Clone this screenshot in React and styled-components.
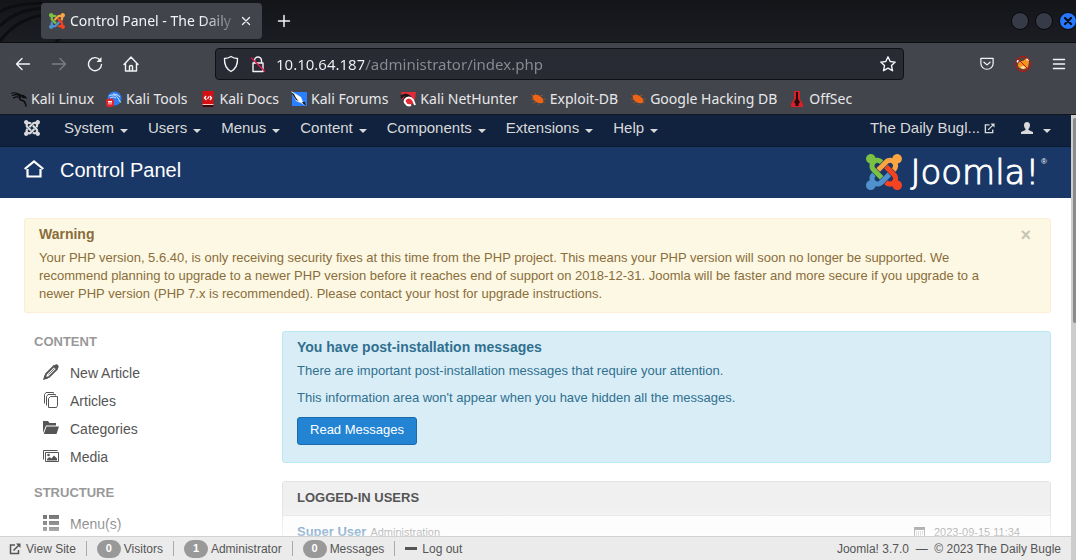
import React from "react";
import styled, { createGlobalStyle } from "styled-components";

const GlobalStyle = createGlobalStyle`
  * { box-sizing: border-box; }
  body { margin: 0; background: #fff; }
  h1, h2, h3, p, ul { margin: 0; padding: 0; }
  ul { list-style: none; }
  a { color: inherit; text-decoration: none; }
  button { border: 0; padding: 0; background: none; color: inherit; font: inherit; cursor: pointer; }
  svg { display: block; flex: none; }
`;

const chromeFont = `"Noto Sans", "Open Sans", sans-serif`;
const pageFont = `"Liberation Sans", Arial, sans-serif`;

/* ---------- browser chrome ---------- */

const Window = styled.div`
  display: flex;
  flex-direction: column;
  height: 100vh;
  overflow: hidden;
  font-family: ${pageFont};
`;

const TitleBar = styled.header`
  display: flex;
  align-items: center;
  flex: none;
  height: 43px;
  padding-left: 41px;
  overflow: hidden;
  background: linear-gradient(#141519, #1c1d23);
  border-bottom: 1px solid #0c0d11;
  color: #f4f4f6;
  font-family: ${chromeFont};
  position: relative;
`;

const Swirl = styled.svg`
  position: absolute;
  left: 0;
  top: 0;
`;

const Tab = styled.div`
  position: relative;
  display: flex;
  align-items: center;
  flex: none;
  gap: 5px;
  width: 221px;
  height: 36px;
  padding: 0 8px;
  border-radius: 4px;
  background: #42444c;
`;

const TabTitle = styled.span`
  flex: 1;
  overflow: hidden;
  white-space: nowrap;
  font-size: 14px;
  line-height: 20px;
  mask-image: linear-gradient(to right, #000 130px, transparent 172px);
`;

const IconButton = styled.button`
  display: flex;
  align-items: center;
  justify-content: center;
  width: ${(p) => p.$size || 20}px;
  height: ${(p) => p.$size || 20}px;
  flex: none;
`;

const NewTab = styled(IconButton)`
  margin-left: 12px;
`;

const WindowControls = styled.div`
  display: flex;
  flex: none;
  gap: 6px;
  margin-left: auto;
  margin-right: -1px;
`;

const Dot = styled.button`
  display: flex;
  align-items: center;
  justify-content: center;
  width: 18px;
  height: 18px;
  border: 1px solid #08090b;
  border-radius: 50%;
  background: ${(p) => (p.$close ? "#2777ff" : "#363b47")};
  color: #0b0e16;
`;

const Toolbar = styled.div`
  display: flex;
  align-items: center;
  flex: none;
  height: 41px;
  padding: 0 7px 0 13px;
  background: #42454c;
  color: #f4f4f6;
`;

const NavButtons = styled.div`
  display: flex;
  flex: none;
  gap: 16px;
  width: 202px;
`;

const UrlBar = styled.form`
  display: flex;
  align-items: center;
  flex: 1;
  gap: 9px;
  height: 32px;
  padding: 0 6px;
  border: 1px solid #101116;
  border-radius: 4px;
  background: #282a34;
`;

const UrlInput = styled.input`
  flex: 1;
  min-width: 0;
  height: 30px;
  padding: 0;
  border: 0;
  outline: 0;
  background: linear-gradient(to right, #f6f6f8 88px, #8b8c93 88px);
  background-clip: text;
  color: transparent;
  font-family: ${chromeFont};
  font-size: 15px;
`;

const ToolbarExtras = styled.div`
  display: flex;
  flex: none;
  gap: 16px;
  margin-left: 73px;
`;

const Bookmarks = styled.nav`
  display: flex;
  flex: none;
  gap: 12px;
  height: 31px;
  padding: 0 11px;
  border-bottom: 1px solid #14161a;
  background: #42454c;
  color: #e8e8ea;
  font-family: ${chromeFont};
  font-size: 14px;
  line-height: 30px;
  white-space: nowrap;
`;

const Bookmark = styled.a`
  display: flex;
  align-items: center;
  gap: 4px;
`;

/* ---------- page ---------- */

const Viewport = styled.div`
  display: flex;
  flex: 1;
  min-height: 0;
`;

const Page = styled.div`
  display: flex;
  flex-direction: column;
  flex: 1;
  min-width: 0;
`;

const ScrollTrack = styled.div`
  flex: none;
  width: 5px;
  padding: 3px 0 0 2px;
  background: #cdcdcd;
`;

const ScrollThumb = styled.div`
  width: 3px;
  height: 205px;
  border-radius: 2px 0 0 2px;
  background: #8b8b8b;
`;

const Navbar = styled.nav`
  display: flex;
  flex: none;
  gap: 20px;
  height: 32px;
  padding: 0 20px 5px 24px;
  border-bottom: 1px solid #0d1a30;
  background: #10223e;
  color: #d9d9d9;
  font-size: 15px;
  line-height: 26px;
`;

const MenuItem = styled.button`
  display: flex;
  align-items: center;
  gap: ${(p) => p.$gap || 6}px;
  white-space: nowrap;
`;

const Caret = styled.span`
  margin-top: 6px;
  border: 4px solid transparent;
  border-top-color: currentColor;
  border-bottom: 0;
`;

const NavBrand = styled.a`
  display: flex;
  align-items: center;
  margin-right: 4px;
`;

const SiteLink = styled.a`
  display: flex;
  align-items: center;
  gap: 4px;
  margin-left: auto;
  margin-right: 6px;
`;

const PageHeader = styled.header`
  display: flex;
  align-items: center;
  flex: none;
  height: 51px;
  padding: 0 24px 6px;
  background: #1a3867;
  color: #fff;
`;

const PageTitle = styled.h1`
  display: flex;
  align-items: center;
  flex: 1;
  gap: 16px;
  font-size: 20px;
  line-height: 24px;
  font-weight: 400;
`;

const Logo = styled.div`
  display: flex;
  align-items: center;
  gap: 8px;
  height: 40px;
  padding-top: 4px;
`;

const Wordmark = styled.span`
  font-family: "DejaVu Sans Light", "DejaVu Sans", sans-serif;
  font-weight: 200;
  font-size: 34px;
  line-height: 36px;
  -webkit-text-stroke: 1px #fff;
`;

const Registered = styled.sup`
  align-self: flex-start;
  margin-left: -6px;
  padding-top: 4px;
  font-size: 8px;
  line-height: 8px;
`;

const Scroller = styled.div`
  position: relative;
  flex: 1;
  min-height: 0;
  overflow: hidden;
  padding: 20px 20px 0 24px;
`;

const Fade = styled.div`
  position: absolute;
  left: 0;
  right: 0;
  bottom: 0;
  height: 30px;
  background: linear-gradient(rgba(255, 255, 255, 0), rgba(255, 255, 255, 0.6));
`;

const Alert = styled.section`
  padding: ${(p) => (p.$info ? "6px 14px 17px" : "6px 36px 9px 14px")};
  border: 1px solid ${(p) => (p.$info ? "#bce8f1" : "#fbeed5")};
  border-radius: 3px;
  background: ${(p) => (p.$info ? "#d9edf7" : "#fcf8e3")};
  color: ${(p) => (p.$info ? "#30708f" : "#8a6d3b")};
  font-size: 13px;
  line-height: 18px;
  position: relative;
`;

const AlertTitle = styled.h2`
  margin-bottom: 6px;
  font-size: 14px;
  line-height: 18px;
`;

const AlertText = styled.p`
  margin-bottom: ${(p) => p.$gap || 0}px;
`;

const Dismiss = styled.button`
  position: absolute;
  right: 19px;
  top: 7px;
  color: #c9c5b4;
  font-size: 18px;
  font-weight: 700;
  line-height: 18px;
`;

const Columns = styled.div`
  display: grid;
  grid-template-columns: 248px minmax(0, 1fr);
  gap: 10px;
  padding-top: 18px;
`;

const Sidebar = styled.nav`
  padding: 1px 0 0 10px;
  color: #555;
  font-size: 14px;
`;

const GroupTitle = styled.h3`
  margin-bottom: 7px;
  color: #999;
  font-size: 13px;
  line-height: 20px;
`;

const LinkList = styled.ul`
  margin-bottom: 12px;
`;

const SideLink = styled.a`
  display: flex;
  align-items: center;
  gap: 11px;
  height: 28px;
  padding-left: 9px;

  svg {
    margin-bottom: 2px;
  }
`;

const Main = styled.main`
  display: flex;
  flex-direction: column;
  gap: 18px;
  margin-left: -10px;
  padding-left: 10px;
`;

const PrimaryButton = styled.button`
  width: 120px;
  height: 28px;
  padding-bottom: 3px;
  border: 1px solid #1b6aaa;
  border-radius: 3px;
  background: #2384d3;
  color: #fff;
  font-size: 13px;
`;

const Panel = styled.section`
  border: 1px solid #e3e3e3;
  border-radius: 3px;
  background: #fcfcfc;
`;

const PanelTitle = styled.h2`
  padding: 0 14px 2px;
  border-bottom: 1px solid #e3e3e3;
  background: #f0f0f0;
  color: #555;
  font-size: 13px;
  line-height: 31px;
`;

const UserRow = styled.div`
  display: flex;
  align-items: center;
  gap: 4px;
  height: 36px;
  padding: 0 30px 5px 14px;
  color: #777;
  font-size: 11px;
`;

const UserName = styled.a`
  color: #3071a9;
  font-size: 13px;
  font-weight: 700;
`;

const UserDate = styled.span`
  display: flex;
  align-items: center;
  gap: 9px;
  margin-left: auto;
`;

const StatusBar = styled.footer`
  display: flex;
  align-items: center;
  flex: none;
  height: 24px;
  padding: 0 10px 0 9px;
  border-top: 1px solid #cfd3d1;
  background: #ebebeb;
  color: #555;
  font-size: 12px;
  line-height: 20px;
`;

const StatusItem = styled.a`
  display: flex;
  align-items: center;
  gap: ${(p) => (p.$badge ? 3 : 5)}px;
  & + & {
    margin-left: 10px;
    padding-left: 10px;
    border-left: 1px solid #aaa;
    height: 15px;
  }
`;

const Badge = styled.span`
  width: 24px;
  height: 18px;
  border-radius: 9px;
  background: #999;
  color: #fff;
  font-size: 11px;
  font-weight: 700;
  line-height: 17px;
  text-align: center;
`;

const Copyright = styled.p`
  margin-left: auto;
  white-space: pre;
`;

/* ---------- icons ---------- */

const joomlaParts = [
  ["#7ac143", "M.6 92.1C.6 58.8 27.4 32 60.4 32c30 0 54.5 21.9 59.2 50.2 32.6-7.6 67.1.6 96.5 30l-44.3 44.3c-20.5-20.5-42.6-16.3-55.4-3.5-14.3 14.3-14.3 37.9 0 52.2l99.5 99.5-44 44.3c-87.7-87.2-49.7-49.7-99.8-99.7-26.8-26.5-35-64.8-24.8-98.9C20.4 144.6.6 120.7.6 92.1z"],
  ["#f9a541", "M130.1 208.5l44.3 44.3c10-10 89.7-89.7 99.7-99.8 14.3-14.3 37.6-14.3 51.9 0 12.8 12.8 17 35-3.5 55.4l44 44.3c31.2-31.2 38.5-67.6 28.9-101.2 29.2-4.1 51.9-29.2 51.9-59.5 0-33.2-26.8-60.1-59.8-60.1-30.3 0-55.4 22.5-59.5 51.6-33.8-9.9-71.7-1.5-98.3 25.1-18.3 19.1-71.1 71.5-99.6 99.9z"],
  ["#f44321", "M396.4 360.7c8.2-32.7-.9-68.5-26.3-93.9-11.8-12.2 5 4.7-99.5-99.7l-44.3 44.3 99.7 99.7c14.3 14.3 14.3 37.6 0 51.9-12.8 12.8-35 17-55.4-3.5l-44 44.3c27.6 30.2 68 38.8 102.7 28 5.5 27.4 29.7 48.1 58.9 48.1 33 0 59.8-26.8 59.8-60.1 0-30.2-22.5-55-51.6-59.1z"],
  ["#5091cd", "M312.1 307.6l-44-44.3c-87 86.4-50.4 50.4-99.7 99.8-14.3 14.3-37.6 14.3-51.9 0-13.1-13.4-16.9-35.3 3.2-55.4l-44-44.3c-30.2 30.2-38 65.2-29.5 98.3-26.7 6-46.2 29.9-46.2 58.2C0 453.2 26.8 480 59.8 480c28.6 0 52.5-19.8 58.6-46.7 32.7 8.2 68.5-.6 94.2-26 32.1-32 12.2-12.4 99.5-99.7z"],
];

const JoomlaMark = ({ size, mono }) => (
  <svg width={size} height={size} viewBox="0 32 448 448">
    {joomlaParts.map(([color, d]) => (
      <path key={color} d={d} fill={mono || color} />
    ))}
  </svg>
);

const Line = ({ children, size = 16, width = 1.4, box = 16, ...rest }) => (
  <svg width={size} height={size} viewBox={`0 0 ${box} ${box}`} fill="none" stroke="currentColor"
    strokeWidth={width} strokeLinecap="round" strokeLinejoin="round" {...rest}>
    {children}
  </svg>
);

const External = ({ size = 12 }) => (
  <Line size={size} box={12} width={1.5} strokeLinecap="butt" strokeLinejoin="miter">
    <path d="M6 2H1.500v8.500H9.500V7M4.500 7.500L10.500 1.500" />
    <path d="M7 .5h4.500V5z" fill="currentColor" stroke="none" />
  </Line>
);

const Dragon = () => (
  <svg width="16" height="16" viewBox="0 0 16 16" fill="none" stroke="#0b0c0f" strokeLinecap="round">
    <path d="M.5 2.200C4 1 7 2 10.500 4.500M1.500 4.500C4 3.300 6.500 3.500 9 5M2.500 7C5 5.500 7 5.500 9 6.500" strokeWidth="1.200" />
    <path d="M9.500 4.500l3 .2 2 1.800-3-.3M9.500 5.500C7.500 8 9 9 11.500 9.500s3 2.500 3.500 5.500" strokeWidth="1.500" />
  </svg>
);

const Tools = () => (
  <svg width="16" height="16" viewBox="0 0 16 16">
    <circle cx="8.500" cy="7.500" r="7" fill="#2d7df0" />
    <path d="M3 5c4-2 7-1 9 2s1 4 3 4M4 7c3-1.500 4-1 6 0M7 3c3 0 5 1 7 3" fill="none" stroke="#d6e8ff" />
    <rect y="7.500" width="8" height="8.500" rx="3" fill="#e3222b" />
    <path d="M2 10.500h4M3 10.500v3M5 10.500v3" stroke="#fff" />
  </svg>
);

const Docs = () => (
  <svg width="16" height="16" viewBox="0 0 15 16">
    <path d="M2 0h11v16H2z" fill="#d60f12" />
    <path d="M2 13.500h11V16H2z" fill="#3b0a0d" />
    <path d="M2 13.500h11" stroke="#f3c6c6" />
    <path d="M5.500 5L4 7l2 2M7 8l1.500-2.500M9.500 5L11 7 9.500 9" fill="none" stroke="#fff" strokeWidth="1.300" />
  </svg>
);

const Forums = () => (
  <svg width="16" height="16" viewBox="0 0 16 16">
    <path d="M1 1h15v14H1z" fill="#2a7fff" />
    <path d="M0 0l5 3 5 3 2 5 3 4-5-3-5-2-2-4z" fill="#f5f8fc" />
    <path d="M0 1l3 2 2 4 3 3-3-1zM10 11l5 4-1-4z" fill="#191c22" />
    <path d="M4 4l5 3 3 6-5-4z" fill="#fff" />
  </svg>
);

const NetHunter = () => (
  <svg width="16" height="16" viewBox="0 0 16 16">
    <path d="M1 1h15l-1 7-3 6-7-1-3-6z" fill="#e12b36" />
    <path d="M1 7c3-4 6-4 8-2-4 0-6 3-4 7" fill="none" stroke="#15171b" strokeWidth="2" />
    <path d="M5 12c-2-4 4-8 8-3l2 5M5 11c1 3 3 4 6 3" fill="none" stroke="#fff" strokeWidth="2" />
    <path d="M0 4l7-1-5 3z" fill="#15171b" />
  </svg>
);

const Bug = () => (
  <svg width="16" height="16" viewBox="0 0 16 16">
    <ellipse cx="8" cy="8" rx="6" ry="3.500" transform="rotate(32 8 8)" fill="#ee6414" />
    <path d="M3 5L1 3M6 4L5 2M10 5l3-1M12 8l4 0M4 9L1 8M6 11l-3 1M9 13l-1 1M13 11l2 1" stroke="#b85a24" strokeWidth=".6" />
  </svg>
);

const OffSec = () => (
  <svg width="16" height="16" viewBox="0 0 16 16">
    <path d="M5 0h6v8l3 5v3H2v-3l3-5z" fill="#dc1f26" />
    <path d="M7 1h2v7l2 3-1.500 2v2h-3v-2L5 11l2-3z" fill="#25090c" />
  </svg>
);

const Fox = () => (
  <svg width="18" height="18" viewBox="0 0 18 18">
    <circle cx="9" cy="9" r="7.500" fill="#5a4436" />
    <path d="M4 11c0-4 2-5 5-5l4-3 2 4-1 5c-2 3-8 3-10-1z" fill="#f6941d" />
    <path d="M12 5l2-2 1 3zM2 6l3-2-1 4z" fill="#fff" />
    <path d="M6 12l3-1 3 1-3 2z" fill="#fbe0b5" />
    <circle cx="9" cy="9" r="7.500" fill="none" stroke="#c90f12" />
    <path d="M4 4l10 10" stroke="#c90f12" />
  </svg>
);

const House = () => (
  <svg width="20" height="19" viewBox="0 0 20 19" fill="none" stroke="#fff" strokeWidth="2.200">
    <path d="M.7 9L10 1.500l9.300 7.500M3.500 9v7.500h13V9" />
  </svg>
);

const Pencil = () => (
  <svg width="16" height="16" viewBox="0 0 16 16" fill="none" stroke="currentColor">
    <path d="M2 14l1-4L11 2l3 3-8 8z" strokeWidth="1.800" />
    <path d="M0 16l1.500-5L5 14.500zM11 2l1.500-1.500Q14 0 15 1t.5 2.500L14 5z" fill="currentColor" stroke="none" />
    <path d="M5.500 10.500l6-6" strokeWidth=".8" />
  </svg>
);

const Stack = () => (
  <svg width="16" height="16" viewBox="0 0 16 16" fill="none" stroke="currentColor">
    <path d="M7.500 4.500h7v9l-1 2h-8V6.500zM3.500 13.500V4.500l1.500-2h7.500v1M1.500 11.500v-9l1.500-2h7.500v1" />
  </svg>
);

const Folder = () => (
  <svg width="16" height="16" viewBox="0 0 16 16" fill="currentColor">
    <path d="M0 1h5l1.500 2H13v2.500H3L0 13zM3.500 6.500H16L13.500 14H.8z" />
  </svg>
);

const Pictures = () => (
  <svg width="16" height="16" viewBox="0 0 16 16">
    <path d="M.5 11.500v-9h14M2.500 4.500h13v9h-13z" fill="none" stroke="currentColor" />
    <path d="M4 12.500V11l2.500-2 2 1.500L11 7.500l3 3v2z" fill="currentColor" />
    <circle cx="5.500" cy="7" r="1.300" fill="currentColor" />
  </svg>
);

const ListIcon = () => (
  <svg width="16" height="16" viewBox="0 0 16 16" fill="currentColor">
    <path d="M0 0h4v4H0zM6 0h10v4H6zM0 6h4v4H0zM6 6h10v4H6zM0 12h4v4H0zM6 12h10v4H6z" />
  </svg>
);

const Calendar = () => (
  <svg width="11" height="12" viewBox="0 0 11 12">
    <path d="M.5 1.500h10v10H.5z" fill="#fff" stroke="currentColor" />
    <path d="M0 1h11v3H0z" fill="currentColor" />
    <path d="M2 6h7M2 8h7M2 10h5" stroke="currentColor" strokeDasharray="1 1" />
  </svg>
);

const Person = () => (
  <svg width="12" height="12" viewBox="0 0 12 12" fill="currentColor">
    <path d="M3 3c0-4 6-4 6 0 0 2-.8 3-1.500 4v1l4.500 2v2H0v-2l4.500-2V7C3.800 6 3 5 3 3z" />
  </svg>
);

/* ---------- data ---------- */

const bookmarks = [
  ["Kali Linux", Dragon],
  ["Kali Tools", Tools],
  ["Kali Docs", Docs],
  ["Kali Forums", Forums],
  ["Kali NetHunter", NetHunter],
  ["Exploit-DB", Bug],
  ["Google Hacking DB", Bug],
  ["OffSec", OffSec],
];

const menus = ["System", "Users", "Menus", "Content", "Components", "Extensions", "Help"];

const groups = [
  ["CONTENT", [["New Article", Pencil], ["Articles", Stack], ["Categories", Folder], ["Media", Pictures]]],
  ["STRUCTURE", [["Menu(s)", ListIcon]]],
];

const counters = [["0", "Visitors"], ["1", "Administrator"], ["0", "Messages"]];

export default function App() {
  return (
    <Window>
      <GlobalStyle />
      <TitleBar>
        <Swirl width="80" height="42" viewBox="0 0 80 42" fill="none" stroke="#0d0e11" strokeWidth="3" aria-hidden="true">
          <path d="M0 12C10 5 24 4 42 3M0 26C12 14 24 10 42 8M0 41C12 25 26 18 42 15M56 42l6-6" />
        </Swirl>
        <Tab>
          <JoomlaMark size={16} />
          <TabTitle>Control Panel - The Daily B</TabTitle>
          <IconButton $size={16} aria-label="Close tab">
            <Line width={1.3}><path d="M4.500 4.500l7 7M11.500 4.500l-7 7" /></Line>
          </IconButton>
        </Tab>
        <NewTab aria-label="New tab">
          <Line width={1.5}><path d="M8 2.500v11M2.500 8h11" /></Line>
        </NewTab>
        <WindowControls>
          <Dot aria-label="Minimize" />
          <Dot aria-label="Maximize" />
          <Dot $close aria-label="Close window">
            <Line size={10} box={10} width={2.2}><path d="M2 2l6 6M8 2L2 8" /></Line>
          </Dot>
        </WindowControls>
      </TitleBar>

      <Toolbar>
        <NavButtons>
          <IconButton aria-label="Back"><Line><path d="M14.500 8H1.500M7 2.500L1.500 8 7 13.500" /></Line></IconButton>
          <IconButton aria-label="Forward"><Line stroke="#7b7d83"><path d="M1.500 8h13M9 2.500L14.500 8 9 13.500" /></Line></IconButton>
          <IconButton aria-label="Reload">
            <Line><path d="M14.500 8.500A6.500 6.500 0 1 1 13 4" /><path d="M14.500 1v5h-5z" fill="currentColor" stroke="none" /></Line>
          </IconButton>
          <IconButton aria-label="Home">
            <Line><path d="M1 8.500L8 1l7 7.500M2.500 7.500v7.500h11V7.500M6.500 15v-4.500q0-1 1.500-1t1.500 1V15" /></Line>
          </IconButton>
        </NavButtons>
        <UrlBar onSubmit={(e) => e.preventDefault()}>
          <Line size={18} box={18}><path d="M9 1.500q3 2 6.500 2 .5 9-6.500 13Q2 12.500 2.500 3.500 6 3.500 9 1.500z" /></Line>
          <Line size={18} box={18}>
            <path d="M5.500 8V5.500a3.500 3.500 0 0 1 7 0V8M4 8h10v8.500H4z" />
            <path d="M2.500 3l13 13" stroke="#e3184f" />
          </Line>
          <UrlInput aria-label="Address" defaultValue="10.10.64.187/administrator/index.php" spellCheck={false} />
          <IconButton type="button" $size={18} aria-label="Bookmark this page">
            <Line><path d="M8 .8l2.200 4.700 5 .6-3.700 3.500 1 5.100L8 12.200l-4.500 2.500 1-5.100L.8 6.100l5-.6z" /></Line>
          </IconButton>
        </UrlBar>
        <ToolbarExtras>
          <IconButton aria-label="Pocket">
            <Line size={14}><path d="M1 1.500h14V7.500a7 6.500 0 0 1-14 0zM4.500 6l3.500 3 3.500-3" /></Line>
          </IconButton>
          <IconButton aria-label="FoxyProxy"><Fox /></IconButton>
          <IconButton aria-label="Application menu">
            <Line width={1.5}><path d="M2.500 3.500h11M2.500 8h11M2.500 12.500h11" /></Line>
          </IconButton>
        </ToolbarExtras>
      </Toolbar>

      <Bookmarks aria-label="Bookmarks">
        {bookmarks.map(([name, Icon]) => (
          <Bookmark href="#" key={name}><Icon />{name}</Bookmark>
        ))}
      </Bookmarks>

      <Viewport>
        <Page>
          <Navbar>
            <NavBrand href="#" aria-label="Joomla"><JoomlaMark size={16} mono="#d9d9d9" /></NavBrand>
            {menus.map((m) => (
              <MenuItem key={m}>{m}<Caret /></MenuItem>
            ))}
            <SiteLink href="#">The Daily Bugl... <External size={11} /></SiteLink>
            <MenuItem $gap={10} aria-label="User menu"><Person /><Caret /></MenuItem>
          </Navbar>
          <PageHeader>
            <PageTitle><House />Control Panel</PageTitle>
            <Logo>
              <JoomlaMark size={36} />
              <Wordmark>Joomla!</Wordmark>
              <Registered>®</Registered>
            </Logo>
          </PageHeader>

          <Scroller>
            <Alert>
              <AlertTitle>Warning</AlertTitle>
              <AlertText>
                Your PHP version, 5.6.40, is only receiving security fixes at this time from the PHP project. This means your PHP version will soon no longer be supported. We recommend planning to upgrade to a newer PHP version before it reaches end of support on 2018-12-31. Joomla will be faster and more secure if you upgrade to a newer PHP version (PHP 7.x is recommended). Please contact your host for upgrade instructions.
              </AlertText>
              <Dismiss aria-label="Dismiss warning">×</Dismiss>
            </Alert>
            <Columns>
              <Sidebar>
                {groups.map(([title, links]) => (
                  <React.Fragment key={title}>
                    <GroupTitle>{title}</GroupTitle>
                    <LinkList>
                      {links.map(([name, Icon]) => (
                        <li key={name}><SideLink href="#"><Icon />{name}</SideLink></li>
                      ))}
                    </LinkList>
                  </React.Fragment>
                ))}
              </Sidebar>
              <Main>
                <Alert $info>
                  <AlertTitle>You have post-installation messages</AlertTitle>
                  <AlertText $gap={9}>There are important post-installation messages that require your attention.</AlertText>
                  <AlertText $gap={10}>This information area won't appear when you have hidden all the messages.</AlertText>
                  <PrimaryButton>Read Messages</PrimaryButton>
                </Alert>
                <Panel>
                  <PanelTitle>LOGGED-IN USERS</PanelTitle>
                  <UserRow>
                    <UserName href="#">Super User</UserName>Administration
                    <UserDate><Calendar />2023-09-15 11:34</UserDate>
                  </UserRow>
                </Panel>
              </Main>
            </Columns>
            <Fade />
          </Scroller>

          <StatusBar>
            <StatusItem href="#"><External />View Site</StatusItem>
            {counters.map(([count, label]) => (
              <StatusItem href="#" key={label} $badge><Badge>{count}</Badge>{label}</StatusItem>
            ))}
            <StatusItem href="#">
              <svg width="12" height="12" viewBox="0 0 12 12"><path d="M0 4h12v3H0z" fill="#555" /></svg>
              Log out
            </StatusItem>
            <Copyright>{"Joomla! 3.7.0  —  © 2023 The Daily Bugle"}</Copyright>
          </StatusBar>
        </Page>
        <ScrollTrack><ScrollThumb /></ScrollTrack>
      </Viewport>
    </Window>
  );
}
